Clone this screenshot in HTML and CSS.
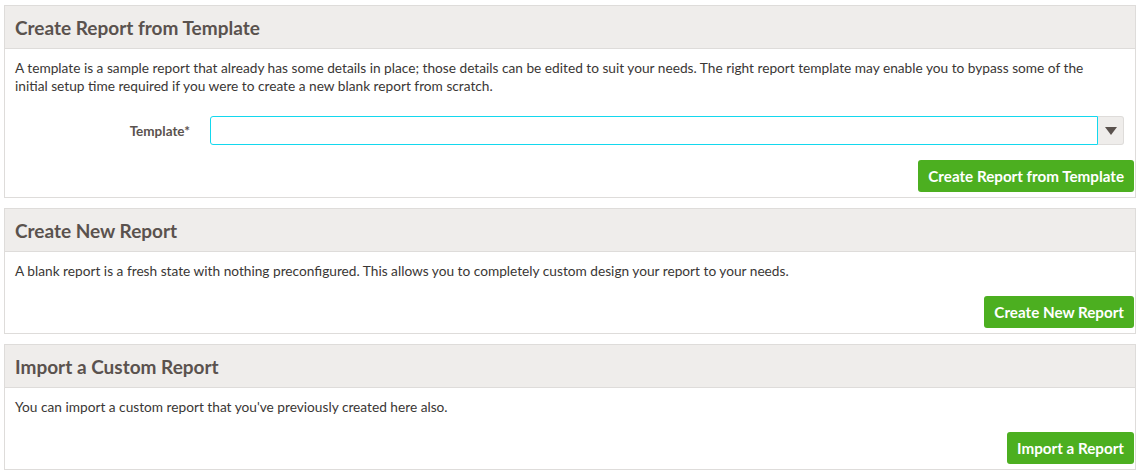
FILE: index.html
```html
<!DOCTYPE html>
<html>
<head>
<meta charset="utf-8">
<link rel="stylesheet" href="styles.css">
</head>
<body>
<div class="page">
  <section class="panel">
    <header class="panel-head"><h2>Create Report from Template</h2></header>
    <div class="panel-body">
      <p class="intro">A template is a sample report that already has some details in place; those details can be edited to suit your needs. The right report template may enable you to bypass some of the initial setup time required if you were to create a new blank report from scratch.</p>
      <div class="form-row">
        <label class="form-label">Template*</label>
        <div class="select">
          <div class="select-input"></div>
          <div class="select-btn"><span class="caret"></span></div>
        </div>
      </div>
      <div class="actions tight"><button class="btn">Create Report from Template</button></div>
    </div>
  </section>
  <section class="panel">
    <header class="panel-head"><h2>Create New Report</h2></header>
    <div class="panel-body">
      <p>A blank report is a fresh state with nothing preconfigured. This allows you to completely custom design your report to your needs.</p>
      <div class="actions"><button class="btn">Create New Report</button></div>
    </div>
  </section>
  <section class="panel">
    <header class="panel-head"><h2>Import a Custom Report</h2></header>
    <div class="panel-body">
      <p>You can import a custom report that you've previously created here also.</p>
      <div class="actions"><button class="btn">Import a Report</button></div>
    </div>
  </section>
</div>
</body>
</html>
```
FILE: styles.css
```css
html, body {
  margin: 0;
  padding: 0;
  background: #ffffff;
}
body {
  font-family: Lato, "Open Sans", sans-serif;
  color: #3a3735;
}
.page {
  padding: 5px 5px 0 4px;
  display: flex;
  flex-direction: column;
  gap: 10px;
}
.panel {
  border: 1px solid #dedcda;
  background: #fff;
}
.panel-head {
  background: #efedeb;
  border-bottom: 1px solid #dedcda;
  height: 42px;
  display: flex;
  align-items: center;
  padding: 0 10px;
}
.panel-head h2 {
  margin: 0;
  font-size: 19px;
  font-weight: 700;
  color: #5a524e;
}
.panel-body {
  padding: 10px 1px 5px 10px;
}
.panel-body p {
  margin: 0 10px 0 0;
  font-size: 13.7px;
  line-height: 18px;
}
.panel-body p.intro {
  margin-right: 22px;
}
.form-row {
  display: flex;
  align-items: center;
  margin: 21px 10px 0 0;
}
.form-label {
  width: 175px;
  padding-right: 20px;
  text-align: right;
  font-size: 13.5px;
  font-weight: 700;
  color: #5a524e;
}
.select {
  flex: 1;
  display: flex;
  height: 29px;
}
.select-input {
  flex: 1;
  border: 1px solid #13d8ee;
  border-radius: 3px 0 0 3px;
}
.select-btn {
  width: 25px;
  background: #efedeb;
  border: 1px solid #dedcda;
  border-left: none;
  border-radius: 0 3px 3px 0;
  display: flex;
  align-items: center;
  justify-content: center;
}
.caret {
  width: 0;
  height: 0;
  border-left: 6px solid transparent;
  border-right: 6px solid transparent;
  border-top: 8px solid #5a524e;
}
.actions {
  display: flex;
  justify-content: flex-end;
  margin-top: 16px;
}
.actions.tight {
  margin-top: 15px;
}
.btn {
  font-family: Lato, "Open Sans", sans-serif;
  font-size: 15.2px;
  font-weight: 700;
  color: #fff;
  background: #4caf20;
  border: none;
  border-radius: 3px;
  height: 32px;
  padding: 0 10px;
}
```
